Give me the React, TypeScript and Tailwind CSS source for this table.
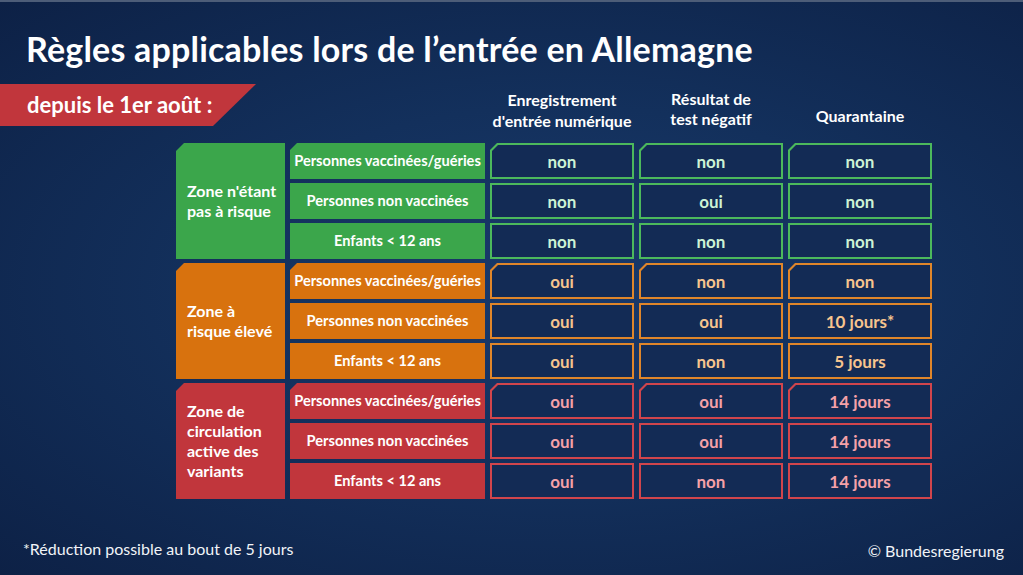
import React from "react";

type Tone = "green" | "orange" | "red";

const tones: Record<Tone, { fill: string; border: string; text: string }> = {
  green: { fill: "bg-[#3ba64b]", border: "bg-[#4cb95c]", text: "text-[#cdf3d5]" },
  orange: { fill: "bg-[#d8720e]", border: "bg-[#e0862a]", text: "text-[#f7c48e]" },
  red: { fill: "bg-[#c1363c]", border: "bg-[#d1454c]", text: "text-[#f6a1a8]" },
};

const blocks: {
  tone: Tone;
  zone: string[];
  rows: { label: string; v: [string, string, string] }[];
}[] = [
  {
    tone: "green",
    zone: ["Zone n'étant", "pas à risque"],
    rows: [
      { label: "Personnes vaccinées/guéries", v: ["non", "non", "non"] },
      { label: "Personnes non vaccinées", v: ["non", "oui", "non"] },
      { label: "Enfants < 12 ans", v: ["non", "non", "non"] },
    ],
  },
  {
    tone: "orange",
    zone: ["Zone à", "risque élevé"],
    rows: [
      { label: "Personnes vaccinées/guéries", v: ["oui", "non", "non"] },
      { label: "Personnes non vaccinées", v: ["oui", "oui", "10 jours*"] },
      { label: "Enfants < 12 ans", v: ["oui", "non", "5 jours"] },
    ],
  },
  {
    tone: "red",
    zone: ["Zone de", "circulation", "active des", "variants"],
    rows: [
      { label: "Personnes vaccinées/guéries", v: ["oui", "oui", "14 jours"] },
      { label: "Personnes non vaccinées", v: ["oui", "oui", "14 jours"] },
      { label: "Enfants < 12 ans", v: ["oui", "non", "14 jours"] },
    ],
  },
];

const cutOuter = "[clip-path:polygon(7px_0,100%_0,100%_100%,0_100%,0_7px)]";
const cutInner = "[clip-path:polygon(6px_0,100%_0,100%_100%,0_100%,0_6px)]";
const cutZone = "[clip-path:polygon(8px_0,100%_0,100%_100%,0_100%,0_8px)]";

function ValueCell({ tone, text, cut }: { tone: Tone; text: string; cut: boolean }) {
  const t = tones[tone];
  return (
    <div className={`${t.border} p-[2px] h-[36px] ${cut ? cutOuter : ""}`}>
      <div
        className={`h-full w-full bg-[#132b55] flex items-center justify-center ${cut ? cutInner : ""}`}
      >
        <span className={`${t.text} text-[17px] font-bold leading-none`}>{text}</span>
      </div>
    </div>
  );
}

export default function App() {
  return (
    <div
      className="w-[1023px] h-[575px] overflow-hidden relative border-t-2 border-[#4d5d78] bg-[radial-gradient(ellipse_at_55%_50%,#1a3a6c_0%,#13305c_45%,#0d2146_100%)] text-white flex flex-col"
      style={{ fontFamily: "Lato, 'Open Sans', sans-serif" }}
    >
      <h1 className="pl-[26px] pt-[27px] text-[34px] font-bold leading-[40px] tracking-[0.2px]">
        Règles applicables lors de l’entrée en Allemagne
      </h1>

      <div className="flex mt-[15px]">
        <div className="w-[256px] h-[42px] bg-[#c1363c] [clip-path:polygon(0_0,100%_0,213px_100%,0_100%)] flex items-center pl-[27px]">
          <span className="text-[22px] font-bold leading-none">depuis le 1er août :</span>
        </div>
      </div>

      <div className="ml-[176px] mt-[-46px] grid grid-cols-[109px_195px_144px_144px_144px] gap-x-[5px]">
        <div className="col-start-3 h-[63px] flex items-center justify-center text-center text-[16px] font-bold leading-[21px] pb-[4px]">
          <span className="whitespace-nowrap">
            Enregistrement
            <br />
            d'entrée numérique
          </span>
        </div>
        <div className="col-start-4 h-[63px] flex items-center justify-center text-center text-[16px] font-bold leading-[20px] pb-[6px]">
          <span>
            Résultat de
            <br />
            test négatif
          </span>
        </div>
        <div className="col-start-5 h-[63px] flex items-center justify-center text-center text-[16px] font-bold leading-[20px] pt-[8px]">
          <span>Quarantaine</span>
        </div>
      </div>

      <div className="ml-[176px] grid grid-cols-[109px_195px_144px_144px_144px] grid-rows-[repeat(9,36px)] gap-x-[5px] gap-y-[4px]">
        {blocks.map((b, bi) => {
          const t = tones[b.tone];
          return (
            <React.Fragment key={bi}>
              <div
                className={`${t.fill} ${cutZone} col-start-1 flex items-center pl-[11px]`}
                style={{ gridRow: `${bi * 3 + 1} / span 3` }}
              >
                <div className="text-[16px] font-bold leading-[20px]">
                  {b.zone.map((z, i) => (
                    <div key={i}>{z}</div>
                  ))}
                </div>
              </div>
              {b.rows.map((r, ri) => (
                <React.Fragment key={ri}>
                  <div
                    className={`${t.fill} ${ri === 0 ? cutOuter : ""} col-start-2 flex items-center justify-center`}
                    style={{ gridRow: `${bi * 3 + ri + 1}` }}
                  >
                    <span className="text-[14.6px] font-bold leading-none whitespace-nowrap">{r.label}</span>
                  </div>
                  {r.v.map((v, vi) => (
                    <div key={vi} style={{ gridRow: `${bi * 3 + ri + 1}`, gridColumn: `${vi + 3}` }}>
                      <ValueCell tone={b.tone} text={v} cut={ri === 0} />
                    </div>
                  ))}
                </React.Fragment>
              ))}
            </React.Fragment>
          );
        })}
      </div>

      <div className="flex-1" />
      <div className="flex justify-between items-center px-[23px] pb-[16px]">
        <span className="text-[16px] leading-none text-[#f1f4f8]">*Réduction possible au bout de 5 jours</span>
        <span className="text-[16px] leading-none text-[#f1f4f8] mr-[-4px] mt-[4px]">© Bundesregierung</span>
      </div>
    </div>
  );
}
